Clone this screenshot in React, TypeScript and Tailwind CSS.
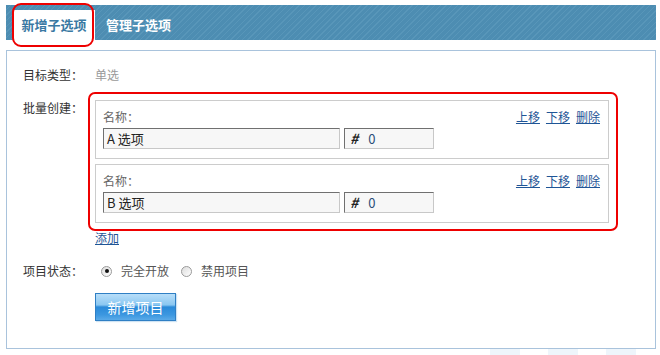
import React from "react";

const font = { fontFamily: '"Noto Sans CJK SC", "Liberation Sans", sans-serif' };

function Radio({ checked }: { checked?: boolean }) {
  return (
    <span className="flex h-[11px] w-[11px] items-center justify-center rounded-full border border-[#9a9a9a] bg-[linear-gradient(135deg,#dcdcdc,#ffffff)]">
      {checked && <span className="h-[4px] w-[4px] rounded-full bg-[#111]" />}
    </span>
  );
}

function Card({ letter, first }: { letter: string; first?: boolean }) {
  return (
    <div className={`w-[514px] border border-[#cccccc] bg-white pt-[7px] pb-[9px] pl-[7px] pr-[8px] ${first ? "" : "mt-[5px]"}`}>
      <div className="flex items-center justify-between leading-[18px]">
        <span className="text-[12px] text-[#666]">名称：</span>
        <span className="flex gap-[6px] text-[12px] text-[#1f5596]">
          <a className="underline">上移</a>
          <a className="underline">下移</a>
          <a className="underline">删除</a>
        </span>
      </div>
      <div className="mt-[2px] flex gap-[4px]">
        <div className="flex h-[21px] w-[237px] items-center border border-t-[#707070] border-l-[#707070] border-r-[#c8c8c8] border-b-[#c8c8c8] bg-[#f7f7f7] pl-[3px] text-[13px] text-[#222]">
          {letter} 选项
        </div>
        <div className="flex h-[21px] w-[90px] items-center border border-t-[#707070] border-l-[#707070] border-r-[#c8c8c8] border-b-[#c8c8c8] bg-[#f7f7f7] pl-[5px] text-[13px] text-[#222]">
          <span className="italic font-bold text-[14px]">#</span>
          <span className="ml-[10px] text-[#2b4f7a]">0</span>
        </div>
      </div>
    </div>
  );
}

export default function App() {
  return (
    <div className="relative h-[355px] w-[660px] overflow-hidden bg-white" style={font}>
      {/* Tab bar */}
      <div className="ml-[6px] mt-[5px] flex h-[35px] w-[650px] items-end bg-[repeating-linear-gradient(135deg,#4d8db2_0px,#4d8db2_3px,#5896b9_3px,#5896b9_4px)] pl-[7px]">
        <div className="flex h-[30px] w-[82px] items-center justify-center bg-white text-[13px] font-bold text-[#3a79a3]">
          新增子选项
        </div>
        <div className="flex h-[30px] items-center pl-[11px] text-[13px] font-bold text-white">
          管理子选项
        </div>
      </div>

      {/* Panel */}
      <div className="ml-[6px] mt-[10px] h-[299px] w-[650px] border border-[#a9c3dc] pl-[16px] pt-[15px]">
        <div className="flex leading-[18px] text-[12px]">
          <span className="w-[72px] text-[#333]">目标类型：</span>
          <span className="text-[#999]">单选</span>
        </div>

        <div className="mt-[15px] flex text-[12px]">
          <span className="w-[72px] leading-[18px] text-[#333]">批量创建：</span>
          <div className="mt-[1px] flex flex-col">
            <Card letter="A" first />
            <Card letter="B" />
            <div className="mt-[6px] leading-[18px]">
              <a className="text-[12px] text-[#1f5596] underline">添加</a>
            </div>
          </div>
        </div>

        <div className="mt-[15px] flex items-center leading-[18px] text-[12px]">
          <span className="w-[72px] text-[#333]">项目状态：</span>
          <span className="ml-[6px] flex items-center">
            <Radio checked />
            <span className="ml-[9px] text-[#555]">完全开放</span>
          </span>
          <span className="ml-[12px] flex items-center">
            <Radio />
            <span className="ml-[9px] text-[#555]">禁用项目</span>
          </span>
        </div>

        <div className="ml-[72px] mt-[13px]">
          <button className="flex h-[28px] w-[81px] items-center justify-center border border-[#2f7fc4] bg-[linear-gradient(#b8def9,#8ac7f1_42%,#2a8ad9_50%,#3c97e0_80%,#5aaae8)] text-[14px] text-white shadow-[1px_1px_1px_#cfe3f3]">
            新增项目
          </button>
        </div>
      </div>

      {/* faint decoration under panel */}
      <div className="ml-[490px] flex h-[6px] gap-[28px]">
        <span className="h-[6px] w-[30px] bg-[#eef5fb]" />
        <span className="h-[6px] w-[30px] bg-[#eef5fb]" />
        <span className="h-[6px] w-[30px] bg-[#eef5fb]" />
      </div>

      {/* Red annotation boxes */}
      <div className="pointer-events-none absolute left-[12px] top-[3px] h-[44px] w-[82px] rounded-[9px] border-2 border-[#ee0000]" />
      <div className="pointer-events-none absolute left-[88px] top-[92px] h-[139px] w-[530px] rounded-[7px] border-2 border-[#ee0000]" />
    </div>
  );
}
